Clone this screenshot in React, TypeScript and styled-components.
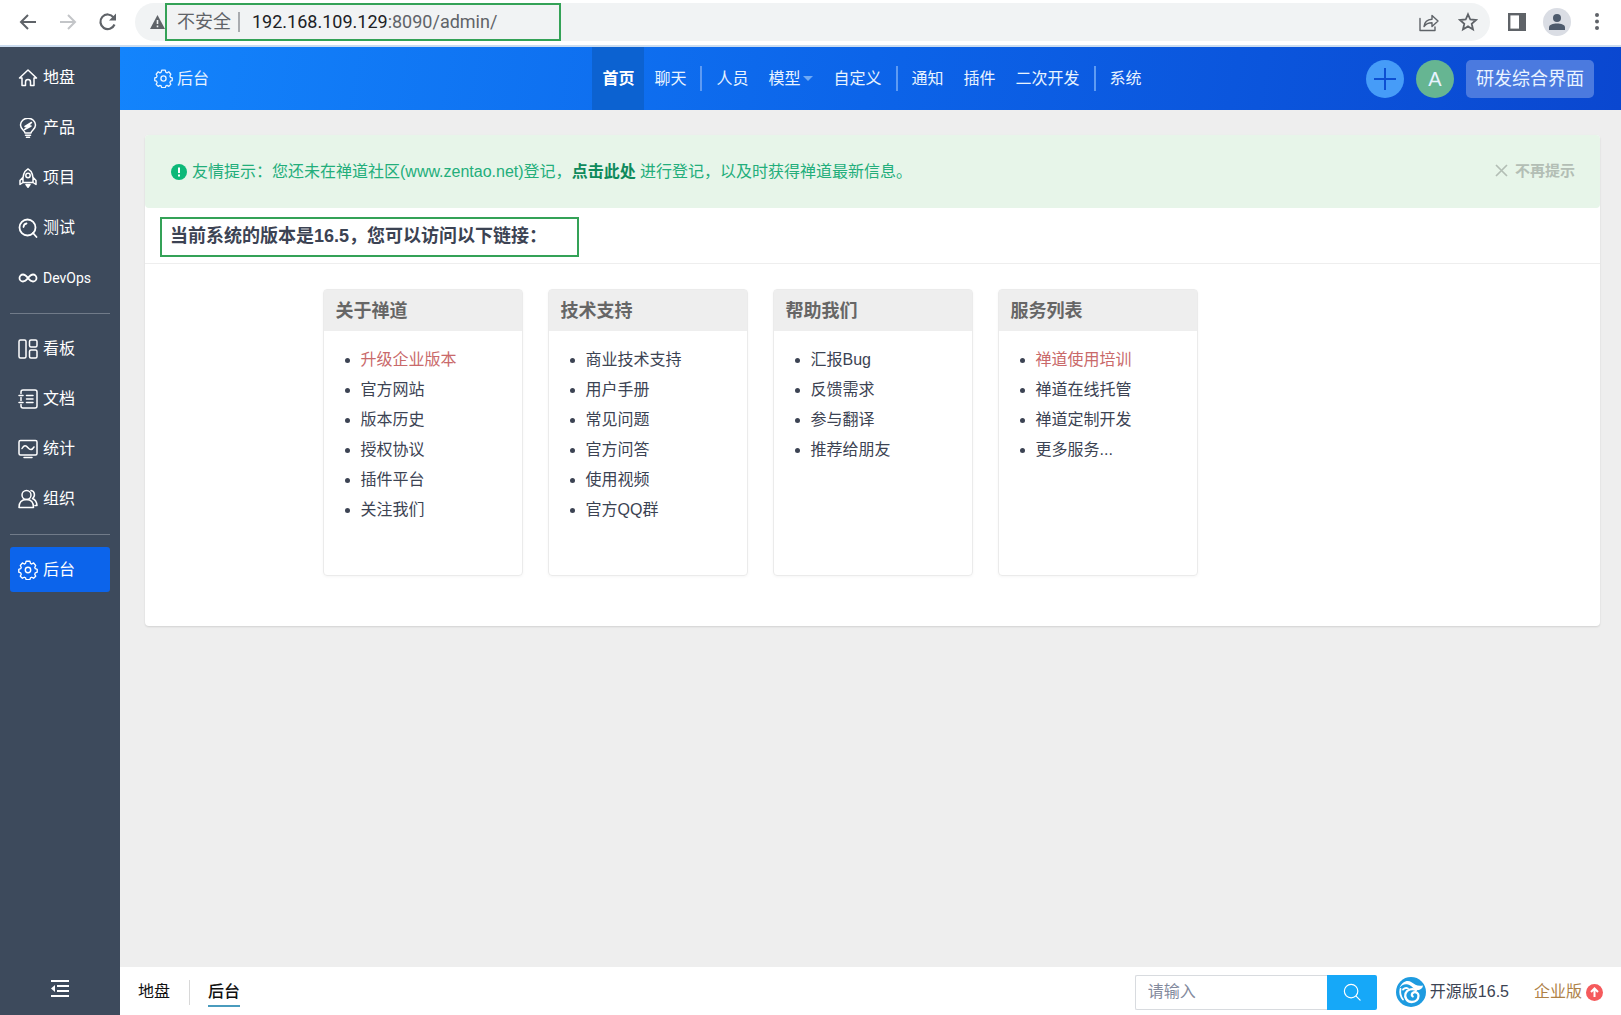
import React from "react";
import styled, { createGlobalStyle, css } from "styled-components";

const GlobalStyle = createGlobalStyle`
  *, *::before, *::after { box-sizing: border-box; }
  body {
    margin: 0;
    background: #eeeeee;
    color: #3c4353;
    font: 16px/24px "Liberation Sans", "Noto Sans CJK SC", sans-serif;
  }
  a { color: inherit; text-decoration: none; }
  button, input { font: inherit; color: inherit; }
  button { border: 0; padding: 0; background: none; cursor: pointer; }
  ul { margin: 0; padding: 0; }
  svg { display: block; flex: none; }
`;

const Page = styled.div`
  display: flex;
  flex-direction: column;
  min-height: 100vh;
`;

/* ---------- browser bar ---------- */

const BrowserBar = styled.div`
  display: flex;
  align-items: center;
  height: 47px;
  padding: 0 14px 2px 18px;
  background: #ffffff;
  border-bottom: 2px solid #cbdcef;
  color: #5f6368;
`;

const BrowserNav = styled.div`
  display: flex;
  gap: 20px;
  margin-right: 17px;
`;

const BarButton = styled.button<{ $dim?: boolean }>`
  display: grid;
  place-items: center;
  width: 20px;
  height: 28px;
  color: ${(p) => (p.$dim ? "#c3c5c8" : "#5f6368")};
`;

const AddressPill = styled.div`
  display: flex;
  flex: 1;
  align-items: center;
  height: 38px;
  padding: 0 12px 0 15px;
  border-radius: 19px;
  background: #f1f3f4;
`;

const Highlight = styled.div`
  display: flex;
  align-items: center;
  border: 2px solid #34a257;
`;

const AddressBox = styled(Highlight)`
  width: 396px;
  height: 38px;
  padding-left: 10px;
  font: 18px/24px Roboto, "Noto Sans CJK SC", sans-serif;
`;

const Insecure = styled.span`
  margin-right: 12px;
  padding-right: 7px;
  border-right: 2px solid #a9acb0;
  line-height: 20px;
`;

const Host = styled.span`
  color: #202124;
`;

const PillActions = styled.div`
  display: flex;
  gap: 19px;
  margin-left: auto;
`;

const BrowserTools = styled.div`
  display: flex;
  align-items: center;
  gap: 16px;
  margin-left: 17px;
`;

const Profile = styled.button`
  display: grid;
  place-items: center;
  width: 28px;
  height: 28px;
  border-radius: 50%;
  background: #dadde4;
  color: #4d5a6c;
`;

/* ---------- app frame ---------- */

const Shell = styled.div`
  display: flex;
  flex: 1;
`;

const Sidebar = styled.nav`
  display: flex;
  flex-direction: column;
  width: 120px;
  padding: 8px 10px 9px;
  background: #3d4a5c;
  color: #ffffff;
`;

const SideList = styled.ul`
  display: flex;
  flex-direction: column;
  gap: 5px;
  list-style: none;
  & + & {
    margin-top: 13px;
    padding-top: 12px;
    border-top: 1px solid #717b89;
  }
`;

const SideLink = styled.a<{ $active?: boolean; $narrow?: boolean }>`
  display: flex;
  align-items: center;
  gap: 5px;
  height: 45px;
  padding-left: 8px;
  border-radius: 3px;
  background: ${(p) => (p.$active ? "#0c64eb" : "transparent")};
  ${(p) =>
    p.$narrow &&
    css`
      font-family: Roboto, sans-serif;
      font-size: 14px;
    `}
`;

const Collapse = styled.button`
  display: grid;
  place-items: center;
  height: 36px;
  margin-top: auto;
`;

const Column = styled.div`
  display: flex;
  flex: 1;
  flex-direction: column;
  min-width: 0;
`;

/* ---------- top header ---------- */

const Header = styled.header`
  display: grid;
  grid-template-columns: 1fr auto 1fr;
  align-items: center;
  height: 63px;
  padding: 0 27px 0 30px;
  background: linear-gradient(100deg, #1384fc 0%, #0c64e9 50%, #0a47d0 100%);
  color: #e8f3ff;
`;

const HeaderTitle = styled.a`
  display: flex;
  align-items: center;
  gap: 4px;
  padding-left: 4px;
`;

const TopNav = styled.nav`
  display: flex;
  align-items: center;
`;

const TopLink = styled.a<{ $active?: boolean }>`
  display: flex;
  align-items: center;
  gap: 3px;
  height: 63px;
  padding: 0 10px;
  ${(p) =>
    p.$active &&
    css`
      background: #0c62d1;
      color: #ffffff;
      font-weight: 700;
    `}
`;

const NavDivider = styled.span`
  width: 2px;
  height: 25px;
  margin: 0 4px;
  background: #5e9bf3;
`;

const Caret = styled.span`
  border: 5px solid transparent;
  border-top-color: #6fa9f5;
  border-bottom-width: 0;
`;

const HeaderActions = styled.div`
  display: flex;
  justify-content: flex-end;
  gap: 12px;
`;

const RoundButton = styled.button<{ $bg: string }>`
  display: grid;
  place-items: center;
  width: 38px;
  height: 38px;
  border-radius: 50%;
  background: ${(p) => p.$bg};
  font-size: 20px;
`;

const ModeButton = styled.button`
  height: 38px;
  padding: 0 10px;
  border-radius: 5px;
  background: #4b7adf;
  font-size: 18px;
`;

/* ---------- content ---------- */

const Main = styled.main`
  flex: 1;
  padding: 25px 21px 25px 25px;
`;

const Panel = styled.section`
  padding-bottom: 50px;
  border-radius: 4px;
  background: #ffffff;
  box-shadow: 0 1px 2px rgba(0, 0, 0, 0.12);
`;

const Notice = styled.div`
  display: flex;
  align-items: center;
  justify-content: space-between;
  height: 73px;
  padding: 0 25px 0 26px;
  border-radius: 4px;
  background: #e7f5e9;
  color: #23ae7b;
`;

const NoticeText = styled.p`
  display: flex;
  align-items: center;
  gap: 5px;
  margin: 0;
`;

const NoticeLink = styled.a`
  color: #0e8a5c;
  font-weight: 700;
`;

const Dismiss = styled.button`
  display: flex;
  align-items: center;
  gap: 7px;
  padding-bottom: 2px;
  color: #b3beb5;
  font-size: 15px;
  font-weight: 700;
`;

const PanelHead = styled.div`
  display: flex;
  align-items: center;
  height: 56px;
  padding: 2px 0 0 15px;
  border-bottom: 1px solid #eeeeee;
`;

const TitleBox = styled(Highlight)`
  width: 419px;
  height: 40px;
  padding: 0 0 2px 8px;
`;

const Title = styled.h1`
  margin: 0;
  font-size: 18px;
  line-height: 24px;
  white-space: nowrap;
`;

const LinkGrid = styled.div`
  display: grid;
  grid-template-columns: repeat(5, 200px);
  gap: 25px;
  justify-content: center;
  padding-top: 25px;
`;

const LinkCard = styled.section`
  min-height: 287px;
  border: 1px solid #ebebeb;
  border-radius: 4px;
  box-shadow: 0 1px 3px rgba(0, 0, 0, 0.04);
`;

const CardTitle = styled.h2`
  margin: 0;
  padding: 9px 12px 8px;
  background: #eeeeee;
  color: #666666;
  font-size: 18px;
  line-height: 24px;
`;

const CardList = styled.ul`
  padding: 14px 0 14px 37px;
  line-height: 30px;
`;

const CardLink = styled.a<{ $hot?: boolean }>`
  color: ${(p) => (p.$hot ? "#c9696a" : "inherit")};
`;

/* ---------- footer ---------- */

const Footer = styled.footer`
  display: flex;
  align-items: center;
  height: 48px;
  padding: 2px 18px 0;
  background: #ffffff;
`;

const Crumb = styled.a<{ $current?: boolean }>`
  padding-top: 2px;
  color: #111111;
  line-height: 26px;
  border-bottom: 2px solid transparent;
  ${(p) =>
    p.$current &&
    css`
      margin-left: 18px;
      border-bottom-color: #4a9bbd;
      font-weight: 500;
    `}
`;

const CrumbDivider = styled.span`
  width: 1px;
  height: 25px;
  margin-left: 19px;
  background: #d8d8d8;
`;

const Search = styled.form`
  display: flex;
  height: 35px;
  margin: 0 19px 0 auto;
`;

const SearchInput = styled.input`
  width: 192px;
  padding: 0 12px;
  border: 1px solid #d8dbdf;
  border-right: 0;
  border-radius: 2px 0 0 2px;
  outline: 0;
  &::placeholder {
    color: #838a9d;
    opacity: 1;
  }
`;

const SearchButton = styled.button`
  display: grid;
  place-items: center;
  width: 50px;
  border-radius: 0 2px 2px 0;
  background: #16a8f8;
  color: #ffffff;
`;

const Version = styled.a<{ $gold?: boolean }>`
  display: flex;
  align-items: center;
  gap: 4px;
  color: ${(p) => (p.$gold ? "#ae8146" : "#3c4353")};
  & + & {
    margin-left: 25px;
  }
`;

/* ---------- icons ---------- */

type IconProps = { size?: number; width?: number; children: React.ReactNode };

const Icon = ({ size = 20, width = 1.5, children }: IconProps) => (
  <svg
    width={size}
    height={size}
    viewBox="0 0 20 20"
    fill="none"
    stroke="currentColor"
    strokeWidth={width}
    strokeLinecap="round"
    strokeLinejoin="round"
    aria-hidden="true"
  >
    {children}
  </svg>
);

const gearPath =
  "M8 1.3h4l.6 2.2 1.3.6 2-1.1 2.2 2.6-1 2 .6 1.3 2 .7v2.8l-2 .7-.6 1.4 1 2-2.2 2.1-2-1-1.3.6-.6 1.8H8l-.6-1.8-1.3-.6-2 1L1.9 16.500l1-2-.6-1.400-2-.7V9.600l2-.7.6-1.300-1-2L4.100 3l2 1.100 1.300-.6z";

const Gear = ({ size }: { size?: number }) => (
  <Icon size={size} width={1.4}>
    <path d={gearPath} transform="translate(.5 0) scale(.95 .98)" />
    <circle cx="10" cy="10" r="2.700" />
  </Icon>
);

const sideIcons: Record<string, React.ReactNode> = {
  home: (
    <Icon>
      <path d="M1.500 10 10 2l8.500 8H16v7.500h-3.500V14a2.500 2.500 0 0 0-5 0v3.500H4V10z" />
    </Icon>
  ),
  product: (
    <Icon>
      <path d="M7 15c0-2.500-4.500-3.500-4.500-8a7.500 6.800 0 0 1 15 0c0 4.500-4.500 5.500-4.500 8zM7.500 17.300h5M8.500 19.300h3" />
      <path d="M13.500 4.500 7 8.500l3 .3-3.500 2.700 6.500-3.500-2.500-.5z" />
    </Icon>
  ),
  project: (
    <Icon>
      <path d="M5 14.500C4.300 7 6.500 3 10 .9c3.500 2.100 5.700 6.100 5 13.600zM4.800 9.500 2 12.500v4l3-2M15.200 9.500l2.800 3v4l-3-2" />
      <circle cx="10" cy="7.500" r="2.200" />
      <path d="M8 16.500h4L10 19.300z" fill="currentColor" />
    </Icon>
  ),
  test: (
    <Icon width={1.8}>
      <circle cx="9.500" cy="9.500" r="8" />
      <path d="m15 15 3.500 4M5.500 9c.2-2 1.200-3.200 3-3.500" />
    </Icon>
  ),
  devops: (
    <Icon width={1.8}>
      <path d="M10 10C8.300 7.800 6.800 6.500 5 6.500a3.500 3.500 0 0 0 0 7c1.800 0 3.300-1.300 5-3.500s3.200-3.500 5-3.500a3.500 3.500 0 0 1 0 7c-1.800 0-3.300-1.300-5-3.500z" />
    </Icon>
  ),
  kanban: (
    <Icon>
      <rect x="1" y="1" width="7" height="18" rx="1.500" />
      <rect x="11.500" y="1" width="7.500" height="7" rx="1.500" />
      <rect x="11.500" y="11" width="7.500" height="8" rx="1.500" />
    </Icon>
  ),
  doc: (
    <Icon>
      <path d="M3 4.500V3q0-2 2-2h12q2 0 2 2v14q0 2-2 2H5q-2 0-2-2v-1.500M3 8.500v3M1 6.500h4M1 13.500h4M8.500 6.500H15M8.500 10H15M8.500 13.500H15" />
    </Icon>
  ),
  stats: (
    <Icon>
      <rect x="1" y="1.500" width="18" height="14.500" rx="1.500" />
      <path d="M4 9.500c2-3.500 3.800-3.500 6-.8s4 2.500 6-.7M6 18.500h8" />
    </Icon>
  ),
  org: (
    <Icon>
      <circle cx="8.500" cy="6" r="4.500" />
      <path d="M1 18.500c0-5 2.800-8 7.500-8s7 3 7 8zM13 1.500c4 .5 4.500 6 1.500 8 2.700 1 4.200 3.500 4.500 7h-2" />
    </Icon>
  ),
  admin: <Gear />,
};

const Logo = () => (
  <svg width="30" height="30" viewBox="0 0 30 30" aria-hidden="true">
    <circle cx="15" cy="15" r="15" fill="#1e9be0" />
    <path
      d="M3.500 11C6 5 11 2.500 15.500 5.200c3.500 2.200 5.500 4.300 11.500 3.300-.3 3-3 5-6 4.600-3.500-.5-5-4.600-9-5.600C8.500 6.600 5.500 8 3.500 11z"
      fill="#ffffff"
    />
    <g fill="none" stroke="#ffffff" strokeLinecap="round">
      <path d="M4.500 12c-.8 4 0 7.500 2.500 10.500" strokeWidth="1.800" />
      <path d="M7 12.500c1.500-1.500 3.500-1.800 5-1" strokeWidth="1.800" />
      <path
        d="M20 13c-4-2-9-.5-10.500 3.500-1.300 4 1.500 8.500 6.300 8.500 4 0 6.700-2.700 6.700-6.300 0-2.700-2.500-4-4.800-3.300-2 .7-2.500 3-1 4"
        strokeWidth="2.300"
      />
    </g>
  </svg>
);

/* ---------- data ---------- */

type SideItem = { icon: string; label: string };

const sideGroups: SideItem[][] = [
  [
    { icon: "home", label: "地盘" },
    { icon: "product", label: "产品" },
    { icon: "project", label: "项目" },
    { icon: "test", label: "测试" },
    { icon: "devops", label: "DevOps" },
  ],
  [
    { icon: "kanban", label: "看板" },
    { icon: "doc", label: "文档" },
    { icon: "stats", label: "统计" },
    { icon: "org", label: "组织" },
  ],
  [{ icon: "admin", label: "后台" }],
];

const navGroups = [
  ["首页", "聊天"],
  ["人员", "模型", "自定义"],
  ["通知", "插件", "二次开发"],
  ["系统"],
];

const cards = [
  {
    title: "关于禅道",
    hot: true,
    links: ["升级企业版本", "官方网站", "版本历史", "授权协议", "插件平台", "关注我们"],
  },
  {
    title: "技术支持",
    hot: false,
    links: ["商业技术支持", "用户手册", "常见问题", "官方问答", "使用视频", "官方QQ群"],
  },
  {
    title: "帮助我们",
    hot: false,
    links: ["汇报Bug", "反馈需求", "参与翻译", "推荐给朋友"],
  },
  {
    title: "服务列表",
    hot: true,
    links: ["禅道使用培训", "禅道在线托管", "禅道定制开发", "更多服务..."],
  },
];

export default function App() {
  return (
    <Page>
      <GlobalStyle />
      <BrowserBar>
        <BrowserNav>
          <BarButton aria-label="后退">
            <Icon width={2}>
              <path d="M18 10H3M10 3l-7 7 7 7" strokeLinecap="butt" strokeLinejoin="miter" />
            </Icon>
          </BarButton>
          <BarButton aria-label="前进" $dim>
            <Icon width={2}>
              <path d="M2 10h15M10 3l7 7-7 7" strokeLinecap="butt" strokeLinejoin="miter" />
            </Icon>
          </BarButton>
          <BarButton aria-label="刷新">
            <Icon width={2.2}>
              <path d="M16.500 12.500A7.300 7.300 0 1 1 15.500 5.300" strokeLinecap="butt" />
              <path d="M18 1.500V8.500H11z" fill="currentColor" stroke="none" />
            </Icon>
          </BarButton>
        </BrowserNav>
        <AddressPill>
          <svg width="15" height="14" viewBox="0 0 15 14" aria-hidden="true">
            <path d="M7.500 0 15 14H0z" fill="#5f6368" />
            <path d="M7.500 5v4M7.500 10.500v1.700" stroke="#f1f3f4" strokeWidth="1.600" />
          </svg>
          <AddressBox>
            <Insecure>不安全</Insecure>
            <Host>192.168.109.129</Host>
            <span>:8090/admin/</span>
          </AddressBox>
          <PillActions>
            <BarButton aria-label="分享">
              <Icon width={1.4}>
                <path d="M1 6.500v12h15V15M5 14.500c.5-4.500 3-7 8-7.300V3.500l6 5.500-6 5.500v-3.700c-3.500 0-6 1-8 3.700z" />
              </Icon>
            </BarButton>
            <BarButton aria-label="收藏">
              <Icon width={1.8}>
                <path
                  d="m10 2.300 2.300 5.200 5.700.5-4.300 3.800 1.300 5.600-5-3-5 3 1.300-5.600L2 8l5.700-.5z"
                  strokeLinejoin="miter"
                />
              </Icon>
            </BarButton>
          </PillActions>
        </AddressPill>
        <BrowserTools>
          <BarButton aria-label="侧边栏">
            <Icon width={2.4}>
              <rect x="2.200" y="2.200" width="15.600" height="15.600" strokeLinejoin="miter" />
              <path d="M12 2h6v16h-6z" fill="currentColor" stroke="none" />
            </Icon>
          </BarButton>
          <Profile aria-label="用户">
            <svg width="16" height="16" viewBox="0 0 16 16" fill="currentColor" aria-hidden="true">
              <circle cx="8" cy="4" r="4" />
              <path d="M0 16v-2.500c0-3 4-4 8-4s8 1 8 4V16z" />
            </svg>
          </Profile>
          <BarButton aria-label="更多">
            <svg width="4" height="17" viewBox="0 0 4 17" fill="currentColor" aria-hidden="true">
              <circle cx="2" cy="2" r="2" />
              <circle cx="2" cy="8.500" r="2" />
              <circle cx="2" cy="15" r="2" />
            </svg>
          </BarButton>
        </BrowserTools>
      </BrowserBar>

      <Shell>
        <Sidebar>
          {sideGroups.map((group) => (
            <SideList key={group[0].label}>
              {group.map((item) => (
                <li key={item.label}>
                  <SideLink
                    href="#"
                    $active={item.icon === "admin"}
                    $narrow={item.icon === "devops"}
                  >
                    {sideIcons[item.icon]}
                    {item.label}
                  </SideLink>
                </li>
              ))}
            </SideList>
          ))}
          <Collapse aria-label="收起菜单">
            <svg width="18" height="17" viewBox="0 0 18 17" aria-hidden="true">
              <path d="M0 1h18M6 6h12M6 11h12M0 16h18" stroke="#ffffff" strokeWidth="2" />
              <path d="M0 8.500 4 5v7z" fill="#ffffff" />
            </svg>
          </Collapse>
        </Sidebar>

        <Column>
          <Header>
            <HeaderTitle href="#">
              <Gear size={19} />
              后台
            </HeaderTitle>
            <TopNav>
              {navGroups.map((group, i) => (
                <React.Fragment key={group[0]}>
                  {i > 0 && <NavDivider />}
                  {group.map((label) => (
                    <TopLink key={label} href="#" $active={label === "首页"}>
                      {label}
                      {label === "模型" && <Caret />}
                    </TopLink>
                  ))}
                </React.Fragment>
              ))}
            </TopNav>
            <HeaderActions>
              <RoundButton $bg="#469cf8" aria-label="新建">
                <svg width="22" height="22" viewBox="0 0 22 22" aria-hidden="true">
                  <path d="M11 0v22M0 11h22" stroke="#0d4fd2" strokeWidth="2" />
                </svg>
              </RoundButton>
              <RoundButton $bg="#66b592">A</RoundButton>
              <ModeButton>研发综合界面</ModeButton>
            </HeaderActions>
          </Header>

          <Main>
            <Panel>
              <Notice>
                <NoticeText>
                  <svg width="16" height="16" viewBox="0 0 16 16" aria-hidden="true">
                    <circle cx="8" cy="8" r="8" fill="#0cb878" />
                    <path d="M8 3.500v5.500M8 10.500v2" stroke="#ffffff" strokeWidth="2" />
                  </svg>
                  <span>
                    友情提示：您还未在禅道社区(www.zentao.net)登记，
                    <NoticeLink href="#">点击此处</NoticeLink> 进行登记，以及时获得禅道最新信息。
                  </span>
                </NoticeText>
                <Dismiss>
                  <svg width="13" height="13" viewBox="0 0 13 13" aria-hidden="true">
                    <path d="m1 1 11 11M12 1 1 12" stroke="currentColor" strokeWidth="1.700" />
                  </svg>
                  不再提示
                </Dismiss>
              </Notice>
              <PanelHead>
                <TitleBox>
                  <Title>当前系统的版本是16.5，您可以访问以下链接：</Title>
                </TitleBox>
              </PanelHead>
              <LinkGrid>
                {cards.map((card) => (
                  <LinkCard key={card.title}>
                    <CardTitle>{card.title}</CardTitle>
                    <CardList>
                      {card.links.map((link, i) => (
                        <li key={link}>
                          <CardLink href="#" $hot={card.hot && i === 0}>
                            {link}
                          </CardLink>
                        </li>
                      ))}
                    </CardList>
                  </LinkCard>
                ))}
              </LinkGrid>
            </Panel>
          </Main>

          <Footer>
            <Crumb href="#">地盘</Crumb>
            <CrumbDivider />
            <Crumb href="#" $current>
              后台
            </Crumb>
            <Search onSubmit={(e) => e.preventDefault()}>
              <SearchInput type="text" placeholder="请输入" aria-label="搜索" />
              <SearchButton type="submit" aria-label="搜索">
                <Icon size={18} width={1.3}>
                  <circle cx="9" cy="9" r="7.500" />
                  <path d="m14.500 14.500 4.500 4.500" />
                </Icon>
              </SearchButton>
            </Search>
            <Version href="#">
              <Logo />
              开源版16.5
            </Version>
            <Version href="#" $gold>
              企业版
              <svg width="17" height="17" viewBox="0 0 17 17" aria-hidden="true">
                <circle cx="8.500" cy="8.500" r="8.500" fill="#f55a5c" />
                <path
                  d="M8.500 13V5M5 8l3.500-3.500L12 8"
                  fill="none"
                  stroke="#ffffff"
                  strokeWidth="2"
                />
              </svg>
            </Version>
          </Footer>
        </Column>
      </Shell>
    </Page>
  );
}
